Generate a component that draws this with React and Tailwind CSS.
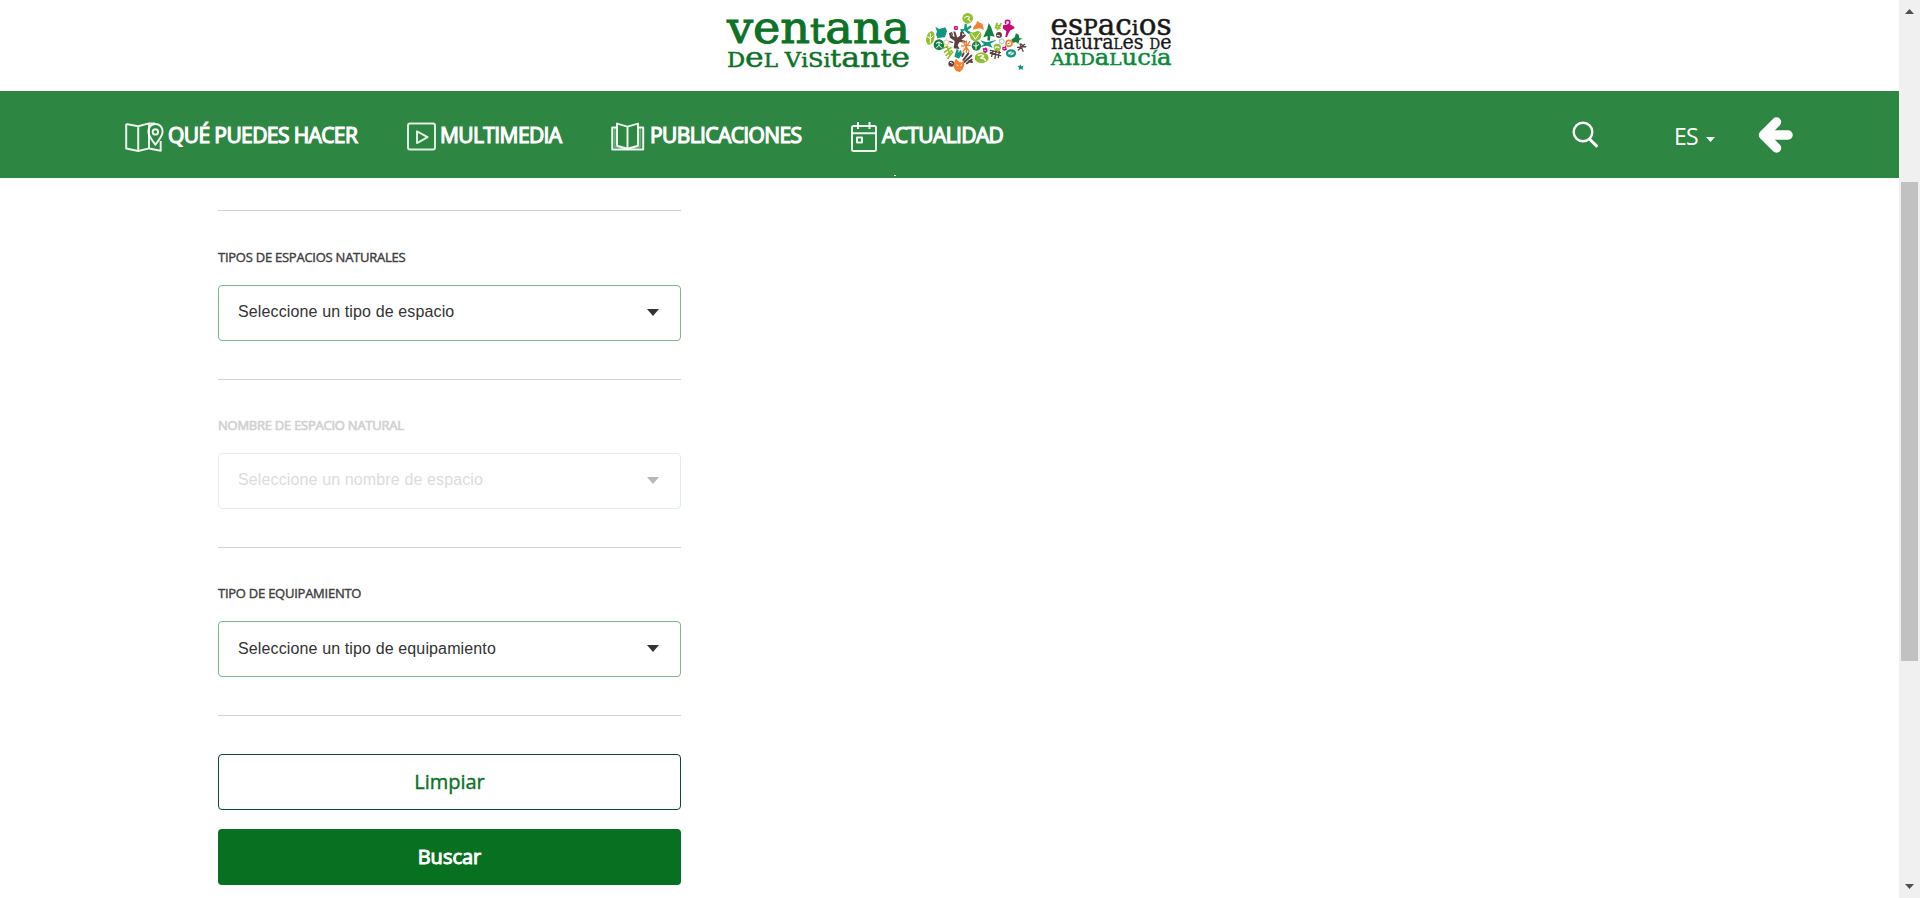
import React from "react";

const GREEN = "#0b7226";
const LIME = "#93bf2f";
const TEAL = "#12967f";
const BROWN = "#5d4040";
const ORANGE = "#f58232";
const PINK = "#c9087a";
const DARK = "#128040";

// One line of the unicase wordmark: [characters, font size] runs fitted to a width.
function Letters({ runs, x, y, width, fill, stroke }) {
  return (
    <text x={x} y={y} fill={fill} stroke={fill} strokeWidth={stroke} textLength={width} lengthAdjust="spacingAndGlyphs" fontSize="20">
      {runs.map(([chars, size], i) => (
        <tspan key={i} fontSize={size}>{chars}</tspan>
      ))}
    </text>
  );
}

function Wildlife() {
  return (
    <g transform="translate(200 0) scale(0.33333)" strokeLinecap="round" strokeLinejoin="round" fill="none">
      <g fill={LIME}>
        <ellipse cx="61" cy="114" rx="12" ry="21" transform="rotate(15 61 114)" />
        <circle cx="173" cy="55" r="16" />
        <path d="M177 92q6 8 18 4 12-8 19 4 2 20-16 24-20 0-21-32z" />
        <ellipse cx="215" cy="173" rx="21" ry="16" />
        <circle cx="262" cy="142" r="11" />
      </g>
      <g stroke="#fff" strokeWidth="3">
        <path d="M61 101v28M53 110l8 6 8-8" />
        <path d="M163 53q8-8 17-1l-7 6q9 0 8 7M184 101q8 8 12 17l13-19" />
        <path d="M205 166q10-5 16 2l-9 6q12 0 14 8M255 144q5-6 12-1" strokeWidth="4" />
      </g>
      <path d="M257 83l4-13m1 19l11-18m-15 5l14 2m-16 5l14 2M99 145l14-6m-9 17l19-13m-15 23l17-14m-11 23l14-19m-16-16l8 24" stroke={LIME} strokeWidth="5" />
      <path fill={TEAL} d="M76 80l11 7 19-5 5 11-6 19-23 2-4-11 3-8zM151 86l11 2 2-17 6 1 1 11 11-7 3 6-12 8 9 8-7 4-12-11-9 9zM140 147l6 3-1 8 8-9 3 13-9 14-14-6zM211 121l20 6 30-8-20 12 7 12-17-6-23 5 14-9z" />
      <path fill={DARK} d="M236 69l7 12 5 14 6 15-13-3-1 15-8-1 1-13-13 4 7-17 5-9zM304 119l10-7 4-12 8 4 2 10 10 2-10 4-3 12-7-6-10 3z" />
      <circle cx="87" cy="134" r="16" fill={DARK} />
      <circle cx="199" cy="138" r="14" fill={DARK} />
      <path d="M79 130l8-4 8 5m-8-5v10l-8 8m8-8l8 8M198 129v18m-7-11l7 3 8-5" stroke="#fff" strokeWidth="3" />
      <path fill={BROWN} d="M131 145l3-22-14-10-3-13 5-3 4 10 8 4-4-17 6 1 6 18 8-6 1-12 6 1v11l8-5 3 5-14 12 13 4-1 5-17-2-6 9 5 12z" />
      <path d="M119 125l8 2m-2-29l2 7m31-8l3 3" stroke={BROWN} strokeWidth="4" />
      <path d="M160 180l15-20m-12 26l21-19m-13 23l14-11m-28-11l4-8m16 24l9 2" stroke={BROWN} strokeWidth="6" />
      <path d="M241 151l30 7m-30-1l31 10m-23-15l-4 17m13-16l-3 22m13-21l-3 19m-24-13l24 5M323 142l24-2m-17-8l9 22m-14-4l19-17m-11-1l12 10" stroke={BROWN} strokeWidth="4" />
      <circle cx="124" cy="191" r="9" fill={BROWN} /><circle cx="267" cy="105" r="9" fill={BROWN} />
      <path d="M121 187l6 3M262 106l7 2" stroke="#fff" strokeWidth="3" />
      <path fill={ORANGE} d="M135 181l4-5 9 11h9l3-8 3 16-5 13-9 9-12-5-7-14zM190 82l9-11 2-9 8 6 8 3 5 18-12-4-9 1-13 3z" />
      <path d="M159 124l18 30m2-29l-20 30m-5-17l27-2m-12-13v34" stroke={ORANGE} strokeWidth="4" />
      <path d="M141 195l3 2m8-1l3-1" stroke="#fff" strokeWidth="3" />
      <path d="M287 70q-3-10 6-9 8 0 6 9l-5 6" stroke={PINK} strokeWidth="5" />
      <path fill={PINK} d="M279 76l20-4 13 8 2 5-13 6-5 8-5 13-5-1 3-18-10-7z" />
      <g fill={PINK}><rect x="132" y="78" width="12" height="12" rx="4" /><path d="M218 145h6l3-3 5 5v9l-6 3-6-3zM277 140l6 1 5-5 1 8 2 5-7 3-7-3z" /></g>
      <path d="M136 84h5M222 151h5M281 146l4-1" stroke="#fff" strokeWidth="2" />
      <circle cx="297" cy="130" r="9" stroke={ORANGE} strokeWidth="5" />
      <path d="M294 131l6-2" stroke={ORANGE} strokeWidth="3" />
      <ellipse cx="303" cy="160" rx="12" ry="9" stroke={TEAL} strokeWidth="7" />
      <path d="M298 165l11-10" stroke={TEAL} strokeWidth="3" />
      <circle cx="109" cy="127" r="7" stroke="#f6c9a8" strokeWidth="4" strokeDasharray="4 3" />
      <circle cx="275" cy="124" r="7" stroke="#a2d8cf" strokeWidth="4" strokeDasharray="4 3" />
      <path fill={TEAL} d="M331 193l3 6 7-2-3 6 2 6-7-2-7 3 1-7-4-5 6-1z" />
    </g>
  );
}

function Logo() {
  return (
    <svg className="h-[90px] w-[480px]" viewBox="0 0 480 90" fontFamily="'DejaVu Serif', serif" role="img" aria-label="Ventana del Visitante">
      <Letters x={17} y={42.8} width={183} fill={GREEN} stroke={1} runs={[["ven", 44], ["t", 36], ["ana", 44]]} />
      <Letters x={17} y={66.7} width={183} fill={GREEN} stroke={0.5} runs={[["D", 20], ["e", 28], ["L ", 19], ["V", 20], ["i", 19], ["S", 20], ["i", 19], ["t", 24], ["an", 28], ["t", 24], ["e", 28]]} />
      <Wildlife />
      <Letters x={340.500} y={35} width={121} fill="#181818" stroke={0.5} runs={[["es", 29], ["P", 21.5], ["ac", 29], ["i", 21], ["os", 29]]} />
      <Letters x={341} y={49} width={120.500} fill="#181818" stroke={0.3} runs={[["na", 20], ["t", 16], ["ura", 20], ["L", 14], ["es ", 20], ["D", 14], ["e", 20]]} />
      <Letters x={341} y={65.300} width={120.500} fill="#0a8a3a" stroke={0.5} runs={[["A", 17.500], ["n", 23], ["D", 17.500], ["a", 23], ["L", 17.500], ["uc", 23], ["í", 18], ["a", 23]]} />
    </svg>
  );
}

function MapIcon() {
  return (
    <svg className="h-[30px] w-[40px]" viewBox="0 0 40 30" fill="none" stroke="#fff" strokeOpacity="0.9" strokeWidth="2" strokeLinejoin="round">
      <path d="M1.200 2l12 2.200L24 1.400h6M1.200 2v24.500L13.200 29l11-2.600 11.500 2.300V19M13.200 4.200V29M24 2v24" />
      <path d="M30.400 22.800c-3-4.700-7-8.500-7-13.300 0-4.400 3-7.600 7-7.600s7.200 3.200 7.200 7.600c0 4.800-4.200 8.600-7.200 13.300z" />
      <circle cx="30.400" cy="9.900" r="2.700" />
    </svg>
  );
}

function PlayIcon() {
  return (
    <svg className="h-[30px] w-[30px]" viewBox="0 0 30 30" fill="none" stroke="#fff" strokeOpacity="0.85" strokeWidth="2" strokeLinejoin="round">
      <rect x="1" y="1.500" width="27" height="26" rx="2" />
      <path d="M10 9.300v11.800l10.600-5.900z" />
    </svg>
  );
}

function BookIcon() {
  return (
    <svg className="h-[30px] w-[34px]" viewBox="0 0 34 30" fill="none" stroke="#fff" strokeOpacity="0.9" strokeWidth="2" strokeLinejoin="round">
      <path d="M6 5.500H1.200v22h31v-22H27.500" />
      <path d="M6 1.600l10.500 3L27 1.600v22.200l-10.500 3-10.500-3zM16.500 5v22" />
      <path d="M3.700 6v18.800l12.800 2.700 12.800-2.700V6" strokeOpacity="0.3" />
    </svg>
  );
}

function CalendarIcon() {
  return (
    <svg className="h-[32px] w-[28px]" viewBox="0 0 28 32" fill="none" stroke="#fff" strokeOpacity="0.9" strokeWidth="2" strokeLinejoin="round">
      <rect x="1" y="5" width="24" height="25" rx="1.500" />
      <path d="M1 12.300h24M7 1v7M18.500 1v7" />
      <rect x="6" y="16.500" width="5" height="5" />
    </svg>
  );
}

const NAV = [
  { label: "QUÉ PUEDES HACER", Icon: MapIcon, cls: "w-[282px]", gap: "w-[43px]" },
  { label: "MULTIMEDIA", Icon: PlayIcon, cls: "w-[204px]", gap: "w-[33px]" },
  { label: "PUBLICACIONES", Icon: BookIcon, cls: "w-[240px]", gap: "w-[39px]" },
  { label: "ACTUALIDAD", Icon: CalendarIcon, cls: "w-[180px]", gap: "w-[31px]" },
];

function Caret({ color }) {
  return (
    <svg className="mb-px h-[7px] w-[12px]" viewBox="0 0 12 7"><path d="M0 0h12L6 7z" fill={color} /></svg>
  );
}

function Field({ label, placeholder, disabled, pad = "pb-[3px]" }) {
  return (
    <div className="flex h-[167px] flex-col">
      <div className="flex h-[73px] items-start pt-[36px]">
        <span className={"whitespace-nowrap text-[13px] leading-[18px] tracking-[-0.25px] " + (disabled ? "text-[#d2d2d2] [-webkit-text-stroke:0.7px_#d2d2d2]" : "text-[#404040] [-webkit-text-stroke:0.4px_#404040]")}>{label}</span>
      </div>
      <div className={"flex h-[56px] items-center justify-between rounded-[4px] border pl-[19px] pr-[21px] " + (disabled ? "border-[#e2eeea]" : "border-[#7db68c]")}>
        <span className={"font-['Liberation_Sans',sans-serif] text-[16px] tracking-[0.13px] " + pad + " " + (disabled ? "text-[#dcdcdc]" : "text-[#333]")}>{placeholder}</span>
        <Caret color={disabled ? "#b8b8b8" : "#333"} />
      </div>
    </div>
  );
}

const Rule = () => <div className="h-px bg-[#d0d3d2]" />;

export default function App() {
  return (
    <div className="flex h-[898px] w-[1920px] overflow-hidden bg-white font-['Open_Sans',sans-serif]">
      <div className="flex w-[1899px] flex-col">
        <header>
          <div className="flex h-[91px] pl-[710px]"><Logo /></div>
          <nav className="relative flex h-[87px] items-center bg-[#2d8641] pl-[125px] text-white">
            {NAV.map(({ label, Icon, cls, gap }) => (
              <a key={label} className={"flex items-center " + cls}>
                <span className={"flex shrink-0 pt-[4px] " + gap}><Icon /></span>
                <span className="whitespace-nowrap text-[21px] leading-[30px] tracking-[-0.6px] [-webkit-text-stroke:1.2px_#fff]">{label}</span>
              </a>
            ))}
            <div className="flex flex-1 items-center pl-[541px]">
              <svg className="mb-[1px] h-[27px] w-[27px]" viewBox="0 0 27 27" fill="none" stroke="#fff" strokeWidth="2.400" strokeLinecap="round">
                <circle cx="11" cy="11" r="9.300" /><path d="M17.500 18l7 6.800" strokeWidth="3" />
              </svg>
              <span className="ml-[75px] mt-[2px] w-[32px] text-[23px] leading-[30px] tracking-[-0.7px]">ES</span>
              <svg className="mt-[9px] h-[5px] w-[9px]" viewBox="0 0 9 5"><path d="M0 0h9L4.500 5z" fill="#fff" /></svg>
              <svg className="ml-[43px] h-[36px] w-[36px]" viewBox="0 0 36 36" fill="none" stroke="#fff" strokeWidth="9.500" strokeLinecap="round" strokeLinejoin="round">
                <path d="M18.500 5L5.500 18l13 13" /><path d="M6 18h24" />
              </svg>
            </div>
            <div className="absolute left-[894px] top-[84px] h-px w-[2px] bg-white" />
          </nav>
        </header>
        <main className="flex w-[681px] flex-col pl-[218px] pt-[32px]">
          <Rule />
          <div className="pt-px"><Field label="TIPOS DE ESPACIOS NATURALES" placeholder="Seleccione un tipo de espacio" /></div>
          <Rule />
          <Field label="NOMBRE DE ESPACIO NATURAL" placeholder="Seleccione un nombre de espacio" disabled />
          <Rule />
          <Field label="TIPO DE EQUIPAMIENTO" placeholder="Seleccione un tipo de equipamiento" pad="pb-px" />
          <Rule />
          <div className="flex flex-col gap-[19px] pt-[38px]">
            <button className="h-[56px] rounded-[4px] border border-[#0b4a2e] pb-px text-[20px] text-[#0b7226] [-webkit-text-stroke:0.4px_#0b7226]">Limpiar</button>
            <button className="h-[56px] rounded-[4px] bg-[#087021] pb-px text-[20px] text-white [-webkit-text-stroke:1px_#fff]">Buscar</button>
          </div>
        </main>
      </div>
      <aside className="flex w-[21px] flex-col items-center bg-[#f0f0f0]">
        <div className="flex h-[182px] pt-[9px]"><svg className="h-[5px] w-[9px]" viewBox="0 0 9 5"><path d="M0 5h9L4.500 0z" fill="#505050" /></svg></div>
        <div className="h-[479px] w-[17px] bg-[#c1c1c1]" />
        <div className="mt-[223px] flex"><svg className="h-[5px] w-[9px]" viewBox="0 0 9 5"><path d="M0 0h9L4.500 5z" fill="#505050" /></svg></div>
      </aside>
    </div>
  );
}
